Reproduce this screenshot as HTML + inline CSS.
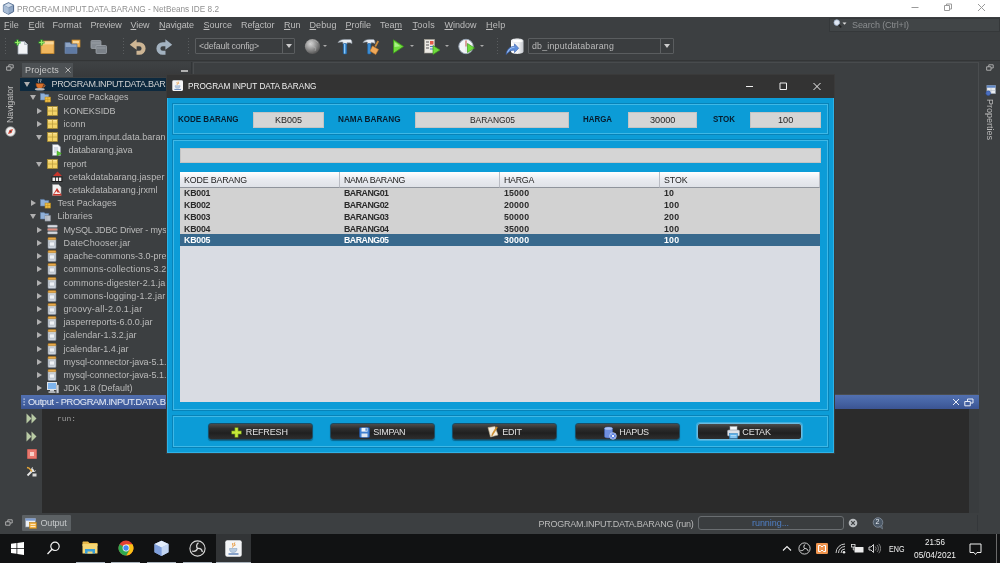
<!DOCTYPE html>
<html><head><meta charset="utf-8"><title>PROGRAM.INPUT.DATA.BARANG - NetBeans IDE 8.2</title>
<style>
html,body{margin:0;padding:0;}
body{width:1000px;height:563px;overflow:hidden;position:relative;background:#3c3f41;font-family:"Liberation Sans",sans-serif;font-size:8.8px;color:#bbbbbb;}
div,span,svg{position:absolute;box-sizing:border-box;}
.t{white-space:nowrap;line-height:12px;height:12px;}
.b{font-weight:bold;}
/* window title */
#wt{left:0;top:0;width:1000px;height:17px;background:#fff;}
#menu{left:0;top:17px;width:1000px;height:16.5px;background:#3c3f41;border-bottom:1px solid #323436;}
#menu .t{top:2px;color:#bdbdbd;font-size:9px;}
#menu u{text-decoration-thickness:1px;text-underline-offset:1px;}
#tb{left:0;top:33px;width:1000px;height:28px;background:#3c3f41;border-bottom:1px solid #333536;}
.combo{background:#3a3d3f;border:1px solid #5a5d5f;height:16px;top:4.5px;border-radius:1px;}
.combo .t{top:1px;left:3px;color:#bbb;font-size:8.8px;}
.carr{width:0;height:0;border-left:3px solid transparent;border-right:3px solid transparent;border-top:4px solid #ccc;}
.sarr{width:0;height:0;border-left:2px solid transparent;border-right:2px solid transparent;border-top:2.5px solid #aaa;top:12px;}
/* tree */
.row{left:20px;width:150px;height:13px;}
.tr{font-size:9px;color:#bbbbbb;}
.ar{width:0;height:0;border-top:3px solid transparent;border-bottom:3px solid transparent;border-left:5px solid #b0b0b0;}
.ad{width:0;height:0;border-left:3.5px solid transparent;border-right:3.5px solid transparent;border-top:5px solid #b0b0b0;}
.pk{width:9px;height:8px;background:#e8b840;border:1px solid #b58a20;}
.jar{width:7px;height:9px;background:#c9cdd3;border:1px solid #8d939b;border-top:2px solid #e0a040;}
/* dialog */
#dlg{left:166px;top:74px;width:669px;height:379.5px;background:#0c9cd7;border:1px solid #3a3a3a;}
#dt{left:0;top:0;width:667px;height:23px;background:#333333;}
.pnl{border:1px solid #3fb8e6;box-shadow:0 0 0 1px #0883b8;}
.inp{background:#d5d5d5;height:16px;border:1px solid #c4c4c4;}
.inp .t{top:1px;color:#222;font-size:9.4px;}
.lbl{color:#071d2e;font-weight:bold;font-size:9px;}
.btn{top:348px;width:105px;height:17px;border-radius:3px;background:linear-gradient(#4c4c4c,#2e2e2e 30%,#202020 60%,#2e2e2e);border:1px solid #1a4d66;box-shadow:0 1px 1px rgba(0,0,0,.35);}
.btn .t{color:#e2e2e2;font-size:9px;top:1.5px;}
.th{top:0;height:15.5px;background:linear-gradient(#ffffff,#e9ebf0 50%,#dfe2e8);border-right:1px solid #b9bcc4;border-bottom:1px solid #8f949c;}
.th .t{left:4px;top:2px;color:#222;font-size:8.8px;}
.trow{left:0;width:640px;height:11.8px;background:#d2d2d2;}
.trow .t{top:.9px;color:#2a2a2a;font-weight:bold;font-size:8.8px;line-height:11.8px;height:11.8px;}
/* taskbar */
#task{left:0;top:534px;width:1000px;height:29px;background:#111213;}
.ul{top:27.5px;height:1.5px;background:#aab4bd;}
</style></head>
<body>
<div id="root" style="left:0;top:0;width:1000px;height:563px;will-change:transform;">
<!-- window title bar -->
<div id="wt">
  <svg style="left:2px;top:2px" width="13" height="13" viewBox="0 0 13 13"><path d="M6.5 0.8 L11.6 3.2 V9.6 L6.5 12.3 L1.4 9.6 V3.2 Z" fill="#8fa6c4" stroke="#4a6488" stroke-width="1"/><path d="M6.5 0.8 L11.6 3.2 L6.5 5.8 L1.4 3.2 Z" fill="#cfdcec" stroke="#4a6488" stroke-width=".5"/><path d="M6.5 5.8 V12.3 L1.4 9.6 V3.2 Z" fill="#a9bdd6"/></svg>
  <span class="t" style="transform:scaleX(0.8965);transform-origin:0 0;left:17px;top:2.5px;font-size:9.2px;color:#909090;">PROGRAM.INPUT.DATA.BARANG - NetBeans IDE 8.2</span>
  <svg style="left:905px;top:0" width="90" height="17" viewBox="0 0 90 17"><g stroke="#9a9a9a" stroke-width="1" fill="none"><path d="M6.5 7.5h7"/><path d="M39.5 5.5h5v5h-5z M41.5 5.5v-1.5h5v5h-2"/><path d="M73 4l7 7M80 4l-7 7"/></g></svg>
</div>
<!-- menu bar -->
<div id="menu">
  <span class="t" style="letter-spacing:0.121px;left:4px;"><u>F</u>ile</span>
  <span class="t" style="letter-spacing:0.117px;left:28.5px;"><u>E</u>dit</span>
  <span class="t" style="letter-spacing:0.081px;left:52.5px;">Format</span>
  <span class="t" style="letter-spacing:-0.145px;left:90.5px;">Preview</span>
  <span class="t" style="letter-spacing:-0.090px;left:130.5px;"><u>V</u>iew</span>
  <span class="t" style="letter-spacing:-0.066px;left:159px;"><u>N</u>avigate</span>
  <span class="t" style="letter-spacing:-0.005px;left:203.5px;"><u>S</u>ource</span>
  <span class="t" style="letter-spacing:-0.068px;left:241px;">Ref<u>a</u>ctor</span>
  <span class="t" style="letter-spacing:-0.005px;left:284px;"><u>R</u>un</span>
  <span class="t" style="letter-spacing:0.094px;left:309.5px;"><u>D</u>ebug</span>
  <span class="t" style="letter-spacing:-0.004px;left:345.5px;"><u>P</u>rofile</span>
  <span class="t" style="letter-spacing:-0.004px;left:380px;">Tea<u>m</u></span>
  <span class="t" style="letter-spacing:0.297px;left:412.5px;"><u>T</u>ools</span>
  <span class="t" style="letter-spacing:-0.003px;left:444.5px;"><u>W</u>indow</span>
  <span class="t" style="letter-spacing:0.246px;left:486px;"><u>H</u>elp</span>
  <div style="left:829px;top:1px;width:171px;height:14px;background:#414547;border:1px solid #35383a;"></div>
  <svg style="left:832px;top:1px" width="16" height="12" viewBox="0 0 16 12"><circle cx="4.8" cy="4.6" r="2.8" fill="#dfe7f2" stroke="#9fb3cc" stroke-width=".8"/><path d="M6.8 6.8l2.4 2.6" stroke="#222" stroke-width="1.6"/><path d="M10.5 4.5h4l-2 2.2z" fill="#ddd"/></svg>
  <span class="t" style="letter-spacing:-0.118px;left:852px;color:#8a8d8f;">Search (Ctrl+I)</span>
</div>
<!-- toolbar -->
<div id="tb">
  <svg style="left:3px;top:4px" width="8" height="20" viewBox="0 0 8 20"><g fill="#5a5d5f"><rect x="2" y="1" width="1" height="1"/><rect x="2" y="4" width="1" height="1"/><rect x="2" y="7" width="1" height="1"/><rect x="2" y="10" width="1" height="1"/><rect x="2" y="13" width="1" height="1"/><rect x="2" y="16" width="1" height="1"/></g></svg>
  <!-- new file -->
  <svg style="left:14px;top:6px" width="16" height="16" viewBox="0 0 16 16"><path d="M4 2.5h6.5l3 3V15H4z" fill="#f2f4f7" stroke="#9aa3ad" stroke-width=".8"/><path d="M10.5 2.5v3h3" fill="#d5dbe2" stroke="#9aa3ad" stroke-width=".6"/><path d="M3.5 0.5v6M0.5 3.5h6" stroke="#2fa52f" stroke-width="2.2"/><path d="M3.5 1.2v4.6M1.2 3.5h4.6" stroke="#a6ef6a" stroke-width=".9"/></svg>
  <!-- new project -->
  <svg style="left:38px;top:6px" width="17" height="16" viewBox="0 0 17 16"><rect x="3" y="2" width="13" height="12.5" fill="#f1b75e" stroke="#c98a2c" stroke-width=".8"/><rect x="3.4" y="2.4" width="12.2" height="3" fill="#f8d79a"/><path d="M3.5 0.5v6M0.5 3.5h6" stroke="#2fa52f" stroke-width="2.2"/><path d="M3.5 1.2v4.6M1.2 3.5h4.6" stroke="#a6ef6a" stroke-width=".9"/></svg>
  <!-- open project -->
  <svg style="left:64px;top:6px" width="17" height="16" viewBox="0 0 17 16"><rect x="8" y="1" width="8" height="7" fill="#f0b45c" stroke="#c98a2c" stroke-width=".7"/><path d="M1 3.5h5l1 1.5h6v9.5H1z" fill="#8ea4c4" stroke="#5e7596" stroke-width=".8"/><path d="M1.3 8h11.5v6.2H1.3z" fill="#5f7aa3"/><rect x="9" y="2" width="6" height="2" fill="#f8d79a"/></svg>
  <!-- close project (grey) -->
  <svg style="left:90px;top:6px" width="18" height="16" viewBox="0 0 18 16"><rect x="1" y="1.5" width="10" height="8" rx="1" fill="#858b92" stroke="#a3a9b0" stroke-width=".7"/><rect x="6" y="6.5" width="10.5" height="8" rx="1" fill="#7b8188" stroke="#a3a9b0" stroke-width=".7"/><path d="M2 4h8M7 9h8.5" stroke="#9ea4ab" stroke-width=".8"/></svg>
  <svg style="left:120px;top:4px" width="8" height="20" viewBox="0 0 8 20"><g fill="#5a5d5f"><rect x="3" y="1" width="1" height="1"/><rect x="3" y="4" width="1" height="1"/><rect x="3" y="7" width="1" height="1"/><rect x="3" y="10" width="1" height="1"/><rect x="3" y="13" width="1" height="1"/><rect x="3" y="16" width="1" height="1"/></g></svg>
  <!-- undo -->
  <svg style="left:129px;top:6px" width="18" height="16" viewBox="0 0 18 16"><path d="M6.500 5.200H10.300a4.300 4.300 0 0 1 0 8.600H7.500" fill="none" stroke="#cdb594" stroke-width="4"/><path d="M.8 5.800L7.600 .3v10.400z" fill="#cdb594"/></svg>
  <!-- redo -->
  <svg style="left:155px;top:6px" width="18" height="16" viewBox="0 0 18 16"><path d="M11.500 5.200H7.700a4.300 4.300 0 0 0 0 8.600h2.800" fill="none" stroke="#a3b2c0" stroke-width="4"/><path d="M17.200 5.800L10.400 .3v10.400z" fill="#a3b2c0"/></svg>
  <svg style="left:185px;top:4px" width="8" height="20" viewBox="0 0 8 20"><g fill="#5a5d5f"><rect x="3" y="1" width="1" height="1"/><rect x="3" y="4" width="1" height="1"/><rect x="3" y="7" width="1" height="1"/><rect x="3" y="10" width="1" height="1"/><rect x="3" y="13" width="1" height="1"/><rect x="3" y="16" width="1" height="1"/></g></svg>
  <div class="combo" style="left:195px;width:100px;"><span class="t" style="letter-spacing:-0.163px;">&lt;default config&gt;</span><div style="left:86px;top:0;width:1px;height:14px;background:#5e6163"></div><div class="carr" style="left:89.5px;top:5px"></div></div>
  <!-- globe -->
  <svg style="left:304px;top:5px" width="17" height="17" viewBox="0 0 17 17"><defs><radialGradient id="gg" cx=".38" cy=".32" r=".75"><stop offset="0" stop-color="#d8d8d8"/><stop offset=".55" stop-color="#8a8a8a"/><stop offset="1" stop-color="#4a4a4a"/></radialGradient></defs><circle cx="8.5" cy="8.5" r="7.6" fill="url(#gg)"/><path d="M4 5c2-1 3 0 4 1s0 3 2 3 2 2 1 4M10 2c1 1 3 1 4 3" stroke="#b9b9b9" stroke-width=".8" fill="none" opacity=".6"/></svg>
  <div class="sarr" style="left:323px"></div>
  <!-- hammer -->
  <svg style="left:337px;top:5px" width="16" height="17" viewBox="0 0 16 17"><path d="M1 4.5c2-3 5-3.3 8-3h4.5c1 .2 1.5 2 1.5 4l-2-.8H10V6H6V4.2C4.5 3.8 3 4 1 4.500z" fill="#e9edf2" stroke="#8e98a5" stroke-width=".6"/><rect x="6.3" y="5.6" width="3.4" height="10.4" rx=".8" fill="#3d8fd6" stroke="#1f5f9f" stroke-width=".6"/><rect x="7" y="6" width="1.1" height="9.5" fill="#8cc6f3"/></svg>
  <!-- clean+build -->
  <svg style="left:362px;top:5px" width="19" height="17" viewBox="0 0 19 17"><path d="M1 4.500c2-3 5-3.300 8-3h2.500c1 .2 1.500 2 1.500 4l-2-.8H9V6H5.500V4.200C4.500 3.800 3 4 1 4.500z" fill="#e9edf2" stroke="#8e98a5" stroke-width=".6"/><rect x="5.600" y="5.600" width="3.200" height="10.400" rx=".8" fill="#3d8fd6" stroke="#1f5f9f" stroke-width=".6"/><path d="M15.500 2.500l1.500 1-3 5.500-1.500-1z" fill="#c98a3c"/><path d="M10.500 8l6 3.500-2.800 5-5.700-3.500z" fill="#f0a95a" stroke="#c47a2a" stroke-width=".6"/></svg>
  <!-- run -->
  <svg style="left:391px;top:5px" width="14" height="17" viewBox="0 0 14 17"><path d="M2.500 1.800L12.500 8.500 2.500 15.200z" fill="#6fdc3c" stroke="#3c9a1c" stroke-width=".8"/><path d="M3.500 4L9.500 8.200 3.500 9z" fill="#b9f59a" opacity=".8"/></svg>
  <div class="sarr" style="left:410px"></div>
  <!-- debug -->
  <svg style="left:423px;top:5px" width="18" height="17" viewBox="0 0 18 17"><rect x="1.500" y="1.500" width="10" height="13.500" fill="#eceae4" stroke="#a9a59a" stroke-width=".6"/><path d="M3 4h3M3 7h3M3 10h3" stroke="#555" stroke-width="1"/><rect x="7" y="3" width="3.500" height="3.500" fill="#e25b4a"/><path d="M7 8.500h3.500M7 11h3.500" stroke="#4a7fc8" stroke-width="1"/><path d="M10 7.500L17 12 10 16.500z" fill="#6fdc3c" stroke="#3c9a1c" stroke-width=".7"/></svg>
  <div class="sarr" style="left:444.500px"></div>
  <!-- profile -->
  <svg style="left:458px;top:5px" width="18" height="17" viewBox="0 0 18 17"><circle cx="8" cy="8.500" r="7.200" fill="#f3f5f8" stroke="#9ba8b8" stroke-width="1"/><path d="M8 8.500V2.500" stroke="#d24a3a" stroke-width="1.200"/><path d="M8 3v11" stroke="#c9ced6" stroke-width=".6"/><path d="M9.500 5.500L16.500 10 9.500 14.500z" fill="#6fdc3c" stroke="#3c9a1c" stroke-width=".7"/></svg>
  <div class="sarr" style="left:479.500px"></div>
  <svg style="left:494px;top:4px" width="8" height="20" viewBox="0 0 8 20"><g fill="#5a5d5f"><rect x="3" y="1" width="1" height="1"/><rect x="3" y="4" width="1" height="1"/><rect x="3" y="7" width="1" height="1"/><rect x="3" y="10" width="1" height="1"/><rect x="3" y="13" width="1" height="1"/><rect x="3" y="16" width="1" height="1"/></g></svg>
  <!-- db icon -->
  <svg style="left:505px;top:4px" width="20" height="19" viewBox="0 0 20 19"><defs><linearGradient id="cy" x1="0" x2="1"><stop offset="0" stop-color="#ffffff"/><stop offset=".6" stop-color="#f0f1f3"/><stop offset="1" stop-color="#c4c8ce"/></linearGradient></defs><path d="M6 4c0-3.200 12.500-3.200 12.500 0v10.500c0 3.200-12.500 3.200-12.500 0z" fill="url(#cy)"/><ellipse cx="12.250" cy="4" rx="5.600" ry="1.700" fill="#ffffff" stroke="#d5d8dd" stroke-width=".5"/><path d="M1 17.500c1-5.500 4-8 8.500-8.200V6.800l4.200 4.400-4.200 4.400v-2.400c-3.500-.2-5.500 1.300-8.500 4.300z" fill="#5f8fdc" stroke="#3a5fa8" stroke-width=".6"/><path d="M2.500 15.500c1.200-3.500 3.500-5 7-5.300" stroke="#a9c8f5" stroke-width=".9" fill="none"/></svg>
  <div class="combo" style="left:528px;width:146px;"><span class="t" style="letter-spacing:0.207px;">db_inputdatabarang</span><div style="left:131px;top:0;width:1px;height:14px;background:#5e6163"></div><div class="carr" style="left:135px;top:5px"></div></div>
</div>
<!-- projects panel -->
<div id="proj" style="left:20px;top:62px;width:172px;height:334px;background:#3c3f41;border-right:1px solid #323537;">
<div style="left:0;top:0;width:171px;height:15px;background:linear-gradient(#3f4244,#37393b);"></div>
<div style="left:2px;top:1px;width:51px;height:14px;background:#4d5154;"></div>
<span class="t" style="letter-spacing:0.186px;left:5px;top:2px;font-size:9px;color:#c8c8c8;">Projects</span>
<svg style="left:45px;top:5px" width="6" height="6" viewBox="0 0 6 6"><path d="M.5 .5l5 5M5.500 .5l-5 5" stroke="#c0c0c0" stroke-width=".9"/></svg>
<div style="left:161px;top:8px;width:7px;height:1.500px;background:#b0b0b0"></div>
<div class="row" style="left:0;top:15.70px;width:171px;background:#0d293e;">
<div class="ad" style="left:4px;top:4.500px"></div>
<svg style="left:13.5px;top:0" width="12" height="13" viewBox="0 0 12 13"><path d="M2 5.500h7.500c0 3-1 5-3.700 5S2 8.500 2 5.500z" fill="#d9722c" stroke="#8c3f12" stroke-width=".6"/><path d="M9.500 6.500c2 0 2 2.500-.5 2.500" fill="none" stroke="#d9722c" stroke-width="1"/><ellipse cx="5.800" cy="11.300" rx="5" ry="1.200" fill="#b8b8b8"/><path d="M4.500 4.500c-1-1.500 1-2 0-3.500M6.800 4.500c-1-1.500 1-2 0-3.500" stroke="#e8e8e8" stroke-width=".7" fill="none"/></svg>
<span class="t tr" style="letter-spacing:-0.327px;left:31.5px;top:.500px;color:#d0d0d0;">PROGRAM.INPUT.DATA.BAR</span>
</div>
<div class="row" style="left:0;top:28.92px;width:171px;">
<div class="ad" style="left:10px;top:4.500px"></div>
<svg style="left:19.5px;top:1.5px" width="11" height="11" viewBox="0 0 12 12"><path d="M.5 1.500h4l1 1.200h4v6H.5z" fill="#8fb0d8" stroke="#5e7fa8" stroke-width=".6"/><rect x="5.500" y="5.500" width="6" height="5.500" fill="#f0c048" stroke="#b8881c" stroke-width=".6"/><path d="M5.500 8.200h6M8.500 5.500v5.500" stroke="#b8881c" stroke-width=".5"/></svg>
<span class="t tr" style="letter-spacing:0.030px;left:37.5px;top:.500px;">Source Packages</span>
</div>
<div class="row" style="left:0;top:42.14px;width:171px;">
<div class="ar" style="left:17px;top:3.500px"></div>
<svg style="left:26.5px;top:1.500px" width="11" height="10" viewBox="0 0 11 10"><rect x=".5" y=".5" width="10" height="9" fill="#f3d468" stroke="#a88c30" stroke-width=".7"/><path d="M.5 5h10M5.500 .5v9" stroke="#b89a3c" stroke-width=".7"/><rect x="1.200" y="1.200" width="3.600" height="1" fill="#fbe6a8"/><rect x="6.200" y="1.200" width="3.600" height="1" fill="#fbe6a8"/></svg>
<span class="t tr" style="letter-spacing:-0.057px;left:43.5px;top:.500px;">KONEKSIDB</span>
</div>
<div class="row" style="left:0;top:55.36px;width:171px;">
<div class="ar" style="left:17px;top:3.500px"></div>
<svg style="left:26.5px;top:1.500px" width="11" height="10" viewBox="0 0 11 10"><rect x=".5" y=".5" width="10" height="9" fill="#f3d468" stroke="#a88c30" stroke-width=".7"/><path d="M.5 5h10M5.500 .5v9" stroke="#b89a3c" stroke-width=".7"/><rect x="1.200" y="1.200" width="3.600" height="1" fill="#fbe6a8"/><rect x="6.200" y="1.200" width="3.600" height="1" fill="#fbe6a8"/></svg>
<span class="t tr" style="letter-spacing:0.097px;left:43.5px;top:.500px;">iconn</span>
</div>
<div class="row" style="left:0;top:68.58px;width:171px;">
<div class="ad" style="left:16px;top:4.500px"></div>
<svg style="left:26.5px;top:1.500px" width="11" height="10" viewBox="0 0 11 10"><rect x=".5" y=".5" width="10" height="9" fill="#f3d468" stroke="#a88c30" stroke-width=".7"/><path d="M.5 5h10M5.500 .5v9" stroke="#b89a3c" stroke-width=".7"/><rect x="1.200" y="1.200" width="3.600" height="1" fill="#fbe6a8"/><rect x="6.200" y="1.200" width="3.600" height="1" fill="#fbe6a8"/></svg>
<span class="t tr" style="letter-spacing:0.038px;left:43.5px;top:.500px;">program.input.data.baran</span>
</div>
<div class="row" style="left:0;top:81.80px;width:171px;">
<svg style="left:30.5px;top:.500px" width="11" height="12" viewBox="0 0 11 12"><path d="M1.500 .500h5.500l2.500 2.500v8.500h-8z" fill="#f4f6f8" stroke="#8b95a1" stroke-width=".6"/><path d="M3 4h4M3 6h4M3 8h2" stroke="#8fa0b5" stroke-width=".6"/><path d="M6 7l4.500 2.500L6 12z" fill="#5dc832" stroke="#2f8a14" stroke-width=".5"/></svg>
<span class="t tr" style="letter-spacing:-0.037px;left:48.5px;top:.500px;">databarang.java</span>
</div>
<div class="row" style="left:0;top:95.02px;width:171px;">
<div class="ad" style="left:16px;top:4.500px"></div>
<svg style="left:26.5px;top:1.500px" width="11" height="10" viewBox="0 0 11 10"><rect x=".5" y=".5" width="10" height="9" fill="#f3d468" stroke="#a88c30" stroke-width=".7"/><path d="M.5 5h10M5.500 .5v9" stroke="#b89a3c" stroke-width=".7"/><rect x="1.200" y="1.200" width="3.600" height="1" fill="#fbe6a8"/><rect x="6.200" y="1.200" width="3.600" height="1" fill="#fbe6a8"/></svg>
<span class="t tr" style="letter-spacing:-0.086px;left:43.5px;top:.500px;">report</span>
</div>
<div class="row" style="left:0;top:108.24px;width:171px;">
<svg style="left:30.5px;top:.500px" width="12" height="12" viewBox="0 0 12 12"><path d="M2 5L6.500 .500 11 5z" fill="#c8352b"/><rect x=".5" y="5.500" width="11" height="5.500" fill="#1e1e1e"/><rect x="1.500" y="6.500" width="2.500" height="3.500" fill="#eee"/><rect x="4.800" y="6.500" width="2.200" height="3.500" fill="#eee"/><rect x="7.800" y="6.500" width="2.500" height="3.500" fill="#eee"/></svg>
<span class="t tr" style="letter-spacing:0.087px;left:48.5px;top:.500px;">cetakdatabarang.jasper</span>
</div>
<div class="row" style="left:0;top:121.46px;width:171px;">
<svg style="left:30.5px;top:.500px" width="12" height="12" viewBox="0 0 12 12"><path d="M1.500 .500h6l2.500 2.500v8.500h-8.500z" fill="#f2f2f2" stroke="#999" stroke-width=".6"/><path d="M1.500 11.500L6 4l5 7.500z" fill="#c8352b"/><path d="M3 10l2.500-3 1.500 2 1-1 1.500 2z" fill="#fff" opacity=".9"/></svg>
<span class="t tr" style="letter-spacing:0.022px;left:48.5px;top:.500px;">cetakdatabarang.jrxml</span>
</div>
<div class="row" style="left:0;top:134.68px;width:171px;">
<div class="ar" style="left:11px;top:3.500px"></div>
<svg style="left:19.5px;top:1.5px" width="11" height="11" viewBox="0 0 12 12"><path d="M.5 1.500h4l1 1.200h4v6H.5z" fill="#8fb0d8" stroke="#5e7fa8" stroke-width=".6"/><rect x="5.500" y="5.500" width="6" height="5.500" fill="#f0c048" stroke="#b8881c" stroke-width=".6"/><path d="M5.500 8.200h6M8.500 5.500v5.500" stroke="#b8881c" stroke-width=".5"/></svg>
<span class="t tr" style="letter-spacing:0.036px;left:37.5px;top:.500px;">Test Packages</span>
</div>
<div class="row" style="left:0;top:147.90px;width:171px;">
<div class="ad" style="left:10px;top:4.500px"></div>
<svg style="left:19.5px;top:1.5px" width="11" height="11" viewBox="0 0 12 12"><path d="M.5 1.500h4l1 1.200h4v6H.5z" fill="#8fb0d8" stroke="#5e7fa8" stroke-width=".6"/><rect x="5.500" y="5" width="6" height="6" fill="#d8dce2" stroke="#7d8590" stroke-width=".6"/><path d="M7 5v6M8.500 5v6M10 5v6" stroke="#7d8590" stroke-width=".5"/></svg>
<span class="t tr" style="letter-spacing:0.054px;left:37.5px;top:.500px;">Libraries</span>
</div>
<div class="row" style="left:0;top:161.12px;width:171px;">
<div class="ar" style="left:17px;top:3.500px"></div>
<svg style="left:26.5px;top:1px" width="11" height="11" viewBox="0 0 11 11"><rect x=".5" y="1" width="10" height="2.500" rx="1" fill="#d8dce2" stroke="#80868f" stroke-width=".5"/><rect x=".5" y="4.300" width="10" height="2.500" rx="1" fill="#e08a7a" stroke="#80868f" stroke-width=".5"/><rect x=".5" y="7.600" width="10" height="2.500" rx="1" fill="#d8dce2" stroke="#80868f" stroke-width=".5"/></svg>
<span class="t tr" style="letter-spacing:-0.160px;left:43.5px;top:.500px;">MySQL JDBC Driver - mys</span>
</div>
<div class="row" style="left:0;top:174.34px;width:171px;">
<div class="ar" style="left:17px;top:3.500px"></div>
<svg style="left:26.5px;top:.500px" width="10" height="12" viewBox="0 0 10 12"><rect x="1" y="1.500" width="8" height="10" rx="1" fill="#cfd5dd" stroke="#858d98" stroke-width=".6"/><rect x="1" y=".500" width="8" height="2.200" rx=".8" fill="#e8a948" stroke="#a8741c" stroke-width=".5"/><rect x="2.500" y="5" width="5" height="4" fill="#eef1f5" stroke="#98a0ab" stroke-width=".4"/></svg>
<span class="t tr" style="letter-spacing:0.130px;left:43.5px;top:.500px;">DateChooser.jar</span>
</div>
<div class="row" style="left:0;top:187.56px;width:171px;">
<div class="ar" style="left:17px;top:3.500px"></div>
<svg style="left:26.5px;top:.500px" width="10" height="12" viewBox="0 0 10 12"><rect x="1" y="1.500" width="8" height="10" rx="1" fill="#cfd5dd" stroke="#858d98" stroke-width=".6"/><rect x="1" y=".500" width="8" height="2.200" rx=".8" fill="#e8a948" stroke="#a8741c" stroke-width=".5"/><rect x="2.500" y="5" width="5" height="4" fill="#eef1f5" stroke="#98a0ab" stroke-width=".4"/></svg>
<span class="t tr" style="letter-spacing:-0.003px;left:43.5px;top:.500px;">apache-commons-3.0-pre</span>
</div>
<div class="row" style="left:0;top:200.78px;width:171px;">
<div class="ar" style="left:17px;top:3.500px"></div>
<svg style="left:26.5px;top:.500px" width="10" height="12" viewBox="0 0 10 12"><rect x="1" y="1.500" width="8" height="10" rx="1" fill="#cfd5dd" stroke="#858d98" stroke-width=".6"/><rect x="1" y=".500" width="8" height="2.200" rx=".8" fill="#e8a948" stroke="#a8741c" stroke-width=".5"/><rect x="2.500" y="5" width="5" height="4" fill="#eef1f5" stroke="#98a0ab" stroke-width=".4"/></svg>
<span class="t tr" style="letter-spacing:0.150px;left:43.5px;top:.500px;">commons-collections-3.2</span>
</div>
<div class="row" style="left:0;top:214.00px;width:171px;">
<div class="ar" style="left:17px;top:3.500px"></div>
<svg style="left:26.5px;top:.500px" width="10" height="12" viewBox="0 0 10 12"><rect x="1" y="1.500" width="8" height="10" rx="1" fill="#cfd5dd" stroke="#858d98" stroke-width=".6"/><rect x="1" y=".500" width="8" height="2.200" rx=".8" fill="#e8a948" stroke="#a8741c" stroke-width=".5"/><rect x="2.500" y="5" width="5" height="4" fill="#eef1f5" stroke="#98a0ab" stroke-width=".4"/></svg>
<span class="t tr" style="letter-spacing:0.128px;left:43.5px;top:.500px;">commons-digester-2.1.ja</span>
</div>
<div class="row" style="left:0;top:227.22px;width:171px;">
<div class="ar" style="left:17px;top:3.500px"></div>
<svg style="left:26.5px;top:.500px" width="10" height="12" viewBox="0 0 10 12"><rect x="1" y="1.500" width="8" height="10" rx="1" fill="#cfd5dd" stroke="#858d98" stroke-width=".6"/><rect x="1" y=".500" width="8" height="2.200" rx=".8" fill="#e8a948" stroke="#a8741c" stroke-width=".5"/><rect x="2.500" y="5" width="5" height="4" fill="#eef1f5" stroke="#98a0ab" stroke-width=".4"/></svg>
<span class="t tr" style="letter-spacing:0.128px;left:43.5px;top:.500px;">commons-logging-1.2.jar</span>
</div>
<div class="row" style="left:0;top:240.44px;width:171px;">
<div class="ar" style="left:17px;top:3.500px"></div>
<svg style="left:26.5px;top:.500px" width="10" height="12" viewBox="0 0 10 12"><rect x="1" y="1.500" width="8" height="10" rx="1" fill="#cfd5dd" stroke="#858d98" stroke-width=".6"/><rect x="1" y=".500" width="8" height="2.200" rx=".8" fill="#e8a948" stroke="#a8741c" stroke-width=".5"/><rect x="2.500" y="5" width="5" height="4" fill="#eef1f5" stroke="#98a0ab" stroke-width=".4"/></svg>
<span class="t tr" style="letter-spacing:0.223px;left:43.5px;top:.500px;">groovy-all-2.0.1.jar</span>
</div>
<div class="row" style="left:0;top:253.66px;width:171px;">
<div class="ar" style="left:17px;top:3.500px"></div>
<svg style="left:26.5px;top:.500px" width="10" height="12" viewBox="0 0 10 12"><rect x="1" y="1.500" width="8" height="10" rx="1" fill="#cfd5dd" stroke="#858d98" stroke-width=".6"/><rect x="1" y=".500" width="8" height="2.200" rx=".8" fill="#e8a948" stroke="#a8741c" stroke-width=".5"/><rect x="2.500" y="5" width="5" height="4" fill="#eef1f5" stroke="#98a0ab" stroke-width=".4"/></svg>
<span class="t tr" style="letter-spacing:0.041px;left:43.5px;top:.500px;">jasperreports-6.0.0.jar</span>
</div>
<div class="row" style="left:0;top:266.88px;width:171px;">
<div class="ar" style="left:17px;top:3.500px"></div>
<svg style="left:26.5px;top:.500px" width="10" height="12" viewBox="0 0 10 12"><rect x="1" y="1.500" width="8" height="10" rx="1" fill="#cfd5dd" stroke="#858d98" stroke-width=".6"/><rect x="1" y=".500" width="8" height="2.200" rx=".8" fill="#e8a948" stroke="#a8741c" stroke-width=".5"/><rect x="2.500" y="5" width="5" height="4" fill="#eef1f5" stroke="#98a0ab" stroke-width=".4"/></svg>
<span class="t tr" style="letter-spacing:0.050px;left:43.5px;top:.500px;">jcalendar-1.3.2.jar</span>
</div>
<div class="row" style="left:0;top:280.10px;width:171px;">
<div class="ar" style="left:17px;top:3.500px"></div>
<svg style="left:26.5px;top:.500px" width="10" height="12" viewBox="0 0 10 12"><rect x="1" y="1.500" width="8" height="10" rx="1" fill="#cfd5dd" stroke="#858d98" stroke-width=".6"/><rect x="1" y=".500" width="8" height="2.200" rx=".8" fill="#e8a948" stroke="#a8741c" stroke-width=".5"/><rect x="2.500" y="5" width="5" height="4" fill="#eef1f5" stroke="#98a0ab" stroke-width=".4"/></svg>
<span class="t tr" style="letter-spacing:0.027px;left:43.5px;top:.500px;">jcalendar-1.4.jar</span>
</div>
<div class="row" style="left:0;top:293.32px;width:171px;">
<div class="ar" style="left:17px;top:3.500px"></div>
<svg style="left:26.5px;top:.500px" width="10" height="12" viewBox="0 0 10 12"><rect x="1" y="1.500" width="8" height="10" rx="1" fill="#cfd5dd" stroke="#858d98" stroke-width=".6"/><rect x="1" y=".500" width="8" height="2.200" rx=".8" fill="#e8a948" stroke="#a8741c" stroke-width=".5"/><rect x="2.500" y="5" width="5" height="4" fill="#eef1f5" stroke="#98a0ab" stroke-width=".4"/></svg>
<span class="t tr" style="letter-spacing:-0.022px;left:43.5px;top:.500px;">mysql-connector-java-5.1.</span>
</div>
<div class="row" style="left:0;top:306.54px;width:171px;">
<div class="ar" style="left:17px;top:3.500px"></div>
<svg style="left:26.5px;top:.500px" width="10" height="12" viewBox="0 0 10 12"><rect x="1" y="1.500" width="8" height="10" rx="1" fill="#cfd5dd" stroke="#858d98" stroke-width=".6"/><rect x="1" y=".500" width="8" height="2.200" rx=".8" fill="#e8a948" stroke="#a8741c" stroke-width=".5"/><rect x="2.500" y="5" width="5" height="4" fill="#eef1f5" stroke="#98a0ab" stroke-width=".4"/></svg>
<span class="t tr" style="letter-spacing:-0.022px;left:43.5px;top:.500px;">mysql-connector-java-5.1.</span>
</div>
<div class="row" style="left:0;top:319.76px;width:171px;">
<div class="ar" style="left:17px;top:3.500px"></div>
<svg style="left:26.5px;top:.500px" width="12" height="12" viewBox="0 0 12 12"><rect x=".5" y=".500" width="9" height="7" fill="#7db4ee" stroke="#dfe4ea" stroke-width="1"/><rect x="3" y="8" width="4" height="1.500" fill="#c8ccd2"/><rect x="1.500" y="9.500" width="7" height="1.200" fill="#dfe4ea"/><rect x="9.500" y="3" width="2.200" height="8" fill="#d0d4da" stroke="#8c929a" stroke-width=".4"/></svg>
<span class="t tr" style="letter-spacing:-0.002px;left:43.5px;top:.500px;">JDK 1.8 (Default)</span>
</div>
</div>
<!-- left sidebar -->
<div style="left:0;top:61px;width:20px;height:452px;background:#3c3f41;"></div>
<svg style="left:5.5px;top:64px" width="8" height="7.2" viewBox="0 0 10 9"><path d="M3.500 3.500V1h5.500v4H6.500M.800 3.500h5.500v4.300H.800z" fill="none" stroke="#c4c4c4" stroke-width="1"/></svg>
<span class="t" style="letter-spacing:-0.170px;left:3.5px;top:122.5px;transform:rotate(-90deg);transform-origin:0 0;font-size:9px;color:#bbbbbb;">Navigator</span>
<svg style="left:4.5px;top:125.5px" width="11" height="11" viewBox="0 0 11 11"><circle cx="5.500" cy="5.500" r="4.800" fill="#f0f0f0" stroke="#9a9a9a" stroke-width=".8"/><path d="M3 8l1.500-4L8 3 6.500 7z" fill="#d24a3a"/><circle cx="5.500" cy="5.500" r=".8" fill="#444"/></svg>
<!-- editor area -->
<div style="left:193px;top:62px;width:786px;height:333px;background:#3c3f41;border:1px solid #4a4d4f;border-top-color:#484b4d;"></div>
<!-- right sidebar -->
<div style="left:980px;top:61px;width:20px;height:452px;background:#3c3f41;"></div>
<svg style="left:985.5px;top:64px" width="8" height="7.2" viewBox="0 0 10 9"><path d="M3.500 3.500V1h5.500v4H6.500M.800 3.500h5.500v4.300H.800z" fill="none" stroke="#c4c4c4" stroke-width="1"/></svg>
<svg style="left:985px;top:84.5px" width="12" height="11" viewBox="0 0 12 12"><rect x="1.500" y=".500" width="9.500" height="9" fill="#e8ebef" stroke="#8a95a5" stroke-width=".6"/><rect x="1.500" y=".500" width="9.500" height="2.500" fill="#5f86c4"/><path d="M6 3v6.500M1.500 6h9.500" stroke="#a9b1bd" stroke-width=".5"/><circle cx="3" cy="9" r="2.600" fill="#4a6fc0" stroke="#2c4a90" stroke-width=".5"/></svg>
<span class="t" style="letter-spacing:-0.003px;left:995.5px;top:99px;transform:rotate(90deg);transform-origin:0 0;font-size:9px;color:#bbbbbb;">Properties</span>

<!-- output panel -->
<div id="outp" style="left:21px;top:395px;width:958px;height:118px;background:#2b2b2b;">
  <div style="left:0;top:0;width:958px;height:14px;background:linear-gradient(#5270b0,#4664a4 50%,#3b5492);"></div>
  <svg style="left:1.5px;top:3px" width="3" height="9" viewBox="0 0 3 9"><g fill="#dfe6f5"><rect x=".5" y=".5" width="1.2" height="1.2"/><rect x=".5" y="3.3" width="1.2" height="1.2"/><rect x=".5" y="6.100" width="1.2" height="1.2"/></g></svg>
  <span class="t" style="letter-spacing:-0.377px;left:7px;top:1px;font-size:9.3px;color:#e8ecf6;">Output - PROGRAM.INPUT.DATA.B</span>
  <svg style="left:931px;top:3px" width="8" height="8" viewBox="0 0 8 8"><path d="M1 1l6 6M7 1l-6 6" stroke="#e8ecf5" stroke-width="1"/></svg>
  <svg style="left:943px;top:2.5px" width="10" height="9" viewBox="0 0 10 9"><path d="M3.500 3.500V1h5.500v4H6.500M.800 3.500h5.500v4.300H.800z" fill="none" stroke="#e8ecf5" stroke-width="1"/></svg>
  <div style="left:0;top:14px;width:21px;height:104px;background:#3c3f41;"></div>
  <div style="left:948px;top:14px;width:10px;height:104px;background:#393c3e;"></div>
  <!-- side icons -->
  <svg style="left:4.5px;top:18px" width="11" height="11" viewBox="0 0 11 11"><path d="M.5 .500L5.500 5.500 .5 10.500z" fill="#b9cba5"/><path d="M5.500 .500L10.500 5.500 5.500 10.500z" fill="#b9cba5"/></svg>
  <svg style="left:4.5px;top:36px" width="11" height="11" viewBox="0 0 11 11"><path d="M.5 .500L5.500 5.500 .5 10.500z" fill="#b9cba5"/><path d="M5.500 .500L10.500 5.500 5.500 10.500z" fill="#b9cba5"/></svg>
  <svg style="left:6px;top:54px" width="10" height="10" viewBox="0 0 10 10"><rect x=".3" y=".3" width="9.400" height="9.400" rx=".8" fill="#e8786e" stroke="#d85a50" stroke-width=".6"/><rect x="3" y="3" width="4" height="4" fill="#f8cfc8"/></svg>
  <svg style="left:5px;top:70.5px" width="11" height="11" viewBox="0 0 11 11"><path d="M1.500 9.500L7.500 3.500" stroke="#e8e8e8" stroke-width="1.800"/><path d="M7 1a2.500 2.500 0 1 0 3 3L8.300 5 6.500 3z" fill="#e8e8e8"/><path d="M1 1.500l2 .5 3 3.500" stroke="#e8a838" stroke-width="1.300" fill="none"/><rect x="6.500" y="7.500" width="4" height="3" fill="#d8d8d8"/></svg>
  <span class="t" style="letter-spacing:-0.051px;left:36px;top:18px;font-family:'Liberation Mono',monospace;font-size:8px;color:#9e9e9e;">run:</span>
</div>
<!-- status bar -->
<div id="stat" style="left:0;top:513px;width:1000px;height:21px;background:#3c3f41;">
  <svg style="left:4.5px;top:6px" width="8" height="7.2" viewBox="0 0 10 9"><path d="M3.500 3.500V1h5.500v4H6.500M.800 3.500h5.500v4.300H.800z" fill="none" stroke="#c4c4c4" stroke-width="1"/></svg>
  <div style="left:22px;top:2px;width:49px;height:16px;background:#5c6164;border-radius:1px;"></div>
  <svg style="left:25px;top:4.500px" width="12" height="11" viewBox="0 0 12 11"><rect x=".5" y=".5" width="10" height="8.500" fill="#eceff3" stroke="#8a93a0" stroke-width=".6"/><rect x=".5" y=".5" width="10" height="2.200" fill="#7d9ccf"/><rect x="4.500" y="4.500" width="7" height="6" fill="#f0b040" stroke="#b57c18" stroke-width=".6"/><path d="M5.500 6.500h5M5.500 8.500h5" stroke="#fff" stroke-width=".7"/></svg>
  <span class="t" style="letter-spacing:-0.172px;left:40.500px;top:4px;font-size:9px;color:#c6c9cb;">Output</span>
  <span class="t" style="letter-spacing:-0.232px;left:538.500px;top:4.500px;font-size:9px;color:#bbbbbb;">PROGRAM.INPUT.DATA.BARANG (run)</span>
  <div style="left:698px;top:3px;width:146px;height:13.500px;border:1px solid #6a6e71;border-radius:3px;background:#3a3d3f;"></div>
  <span class="t" style="letter-spacing:-0.053px;left:752px;top:4px;font-size:9px;color:#4f7fc4;">running...</span>
  <svg style="left:848px;top:5px" width="10" height="10" viewBox="0 0 10 10"><circle cx="5" cy="5" r="4.300" fill="#b9bcbf"/><path d="M3.200 3.200l3.600 3.600M6.800 3.200l-3.600 3.600" stroke="#3c3f41" stroke-width="1.200"/></svg>
  <svg style="left:872px;top:3.500px" width="13" height="13" viewBox="0 0 13 13"><circle cx="6" cy="5.500" r="4.800" fill="#4b5866" stroke="#8e9aa8" stroke-width=".7"/><path d="M7.500 9.500l3 2.500-.5-3.500z" fill="#4b5866" stroke="#8e9aa8" stroke-width=".5"/></svg>
  <span class="t" style="left:875.500px;top:3px;font-size:7px;color:#e8edf3;">2</span>
  <div style="left:977px;top:2px;width:1px;height:16px;background:#34373a"></div>
</div>
<!-- taskbar -->
<div id="task">
  <div style="left:216px;top:0;width:35px;height:29px;background:#323436;"></div>
  <svg style="left:11px;top:8px" width="13" height="13" viewBox="0 0 13 13"><path d="M0 1.800L5.500 1v5H0zM6.300 .900L13 0v6H6.300zM0 6.800h5.500v5L0 11zM6.300 6.800H13V13l-6.700-.900z" fill="#ffffff"/></svg>
  <svg style="left:46px;top:6px" width="16" height="16" viewBox="0 0 16 16"><circle cx="9" cy="6.300" r="4.200" fill="none" stroke="#f2f2f2" stroke-width="1.200"/><path d="M6 9.300L1.500 14" stroke="#f2f2f2" stroke-width="1.300"/></svg>
  <!-- explorer -->
  <svg style="left:82px;top:7px" width="16" height="14" viewBox="0 0 16 14"><path d="M.5 1.500c0-.6.400-1 1-1h4.500l1.500 1.500h8v3H.5z" fill="#e9b949"/><rect x=".5" y="3" width="15" height="9.500" rx=".5" fill="#f6d775"/><path d="M3 8h10v4.500H3z" fill="#3a9fd8"/><path d="M5.500 10.500h5v2h-5z" fill="#f6d775"/></svg>
  <!-- chrome -->
  <svg style="left:118px;top:6px" width="16" height="16" viewBox="0 0 16 16"><circle cx="8" cy="8" r="7.500" fill="#e34133"/><path d="M8 8L1.500 4.200A7.500 7.500 0 0 0 8.300 15.500L11.500 10z" fill="#2ea94f"/><path d="M8 8l3.500 2L8.300 15.500A7.500 7.500 0 0 0 14.500 4.200H8z" fill="#fbc116"/><circle cx="8" cy="8" r="3.400" fill="#fff"/><circle cx="8" cy="8" r="2.700" fill="#4688f1"/></svg>
  <!-- netbeans cube -->
  <svg style="left:153px;top:6px" width="17" height="17" viewBox="0 0 17 17"><path d="M8.500 .800L15.500 4V12.300L8.500 16 1.500 12.300V4z" fill="#9fb8e4"/><path d="M8.500 .800L15.500 4 8.500 7.500 1.500 4z" fill="#e3edfb"/><path d="M8.500 7.500V16L15.500 12.300V4z" fill="#c3d6f3"/><path d="M8.500 7.500V16L1.500 12.300V4z" fill="#7f9fdc"/></svg>
  <!-- OBS -->
  <svg style="left:189px;top:5.500px" width="17" height="17" viewBox="0 0 17 17"><circle cx="8.500" cy="8.500" r="7.600" fill="#1c1c1c" stroke="#d8d8d8" stroke-width="1.100"/><path d="M8.500 8.500c-1.500-2-1-4.500 1-5.800M8.500 8.500c2.500-.3 4.500 1.200 4.800 3.500M8.500 8.500c-1 2.300-3.300 3.300-5.500 2.500" stroke="#d8d8d8" stroke-width="1.300" fill="none"/></svg>
  <!-- java -->
  <svg style="left:225px;top:5.500px" width="17" height="17" viewBox="0 0 17 17"><rect x=".3" y=".3" width="16.400" height="16.400" rx="2" fill="#f4f5f7"/><path d="M8 3c-1.500 1.500 1.500 2.500-.5 4.500M9.800 2.500c-1 1.200 1 2-.3 3.500" stroke="#e8912d" stroke-width="1" fill="none"/><path d="M4.500 8.500h7.500c0 2.500-1.200 4-3.800 4s-3.700-1.500-3.700-4z" fill="#b8cbe0" stroke="#7f9abd" stroke-width=".5"/><path d="M3.500 14h10" stroke="#5a7fb5" stroke-width="1.400"/></svg>
  <div class="ul" style="left:76px;width:29px;"></div>
  <div class="ul" style="left:111px;width:29px;"></div>
  <div class="ul" style="left:147px;width:29px;"></div>
  <div class="ul" style="left:183px;width:29px;"></div>
  <div class="ul" style="left:216px;width:35px;"></div>
  <!-- tray -->
  <div style="left:996px;top:0;width:1px;height:29px;background:#6a6a6a"></div>
  <svg style="left:782px;top:11px" width="10" height="7" viewBox="0 0 10 7"><path d="M1 5.500L5 1.500l4 4" stroke="#f0f0f0" stroke-width="1.100" fill="none"/></svg>
  <svg style="left:798px;top:8px" width="13" height="13" viewBox="0 0 13 13"><circle cx="6.500" cy="6.500" r="5.600" fill="none" stroke="#e0e0e0" stroke-width=".9"/><path d="M6.500 6.500c-1.100-1.500-.700-3.400.800-4.300M6.500 6.500c1.900-.200 3.400.900 3.600 2.600M6.500 6.500c-.800 1.700-2.500 2.500-4.100 1.900" stroke="#e0e0e0" stroke-width="1" fill="none"/></svg>
  <svg style="left:816px;top:9px" width="12" height="11" viewBox="0 0 12 11"><rect x="0" y="0" width="12" height="11" rx="1.200" fill="#f0954f"/><path d="M2.500 2.500h2L6 4l1.500-1.500h2v6h-2L6 7 4.500 8.500h-2z" fill="none" stroke="#fff" stroke-width="1"/></svg>
  <svg style="left:835px;top:9px" width="12" height="11" viewBox="0 0 12 11"><path d="M1 10a9 9 0 0 1 9-9M3.500 10a6.500 6.500 0 0 1 6.500-6.500M6 10a4 4 0 0 1 4-4" stroke="#c8c8c8" stroke-width="1" fill="none"/><circle cx="9" cy="9.200" r="1.300" fill="#e8e8e8"/></svg>
  <svg style="left:851px;top:9.500px" width="13" height="10" viewBox="0 0 13 10"><rect x="3.500" y="3" width="9" height="5.500" rx=".6" fill="#ececec"/><rect x=".5" y=".5" width="3.500" height="2.500" fill="none" stroke="#e8e8e8" stroke-width=".8"/><path d="M2.300 3v3h1.200" stroke="#e8e8e8" stroke-width=".8" fill="none"/></svg>
  <svg style="left:868px;top:9px" width="13" height="11" viewBox="0 0 13 11"><path d="M1 4h2l2.500-2.500v8L3 7H1z" fill="none" stroke="#e8e8e8" stroke-width=".9"/><path d="M7.300 3.500a3 3 0 0 1 0 4M9 2a5 5 0 0 1 0 7M10.800 .800a7 7 0 0 1 0 9.400" stroke="#9a9a9a" stroke-width=".8" fill="none"/></svg>
  <span class="t" style="transform:scaleX(0.8124);transform-origin:0 0;left:888.5px;top:8.500px;font-size:8.8px;color:#f2f2f2;">ENG</span>
  <span class="t" style="transform:scaleX(0.8877);transform-origin:0 0;left:925px;top:2px;font-size:9px;color:#f2f2f2;">21:56</span>
  <span class="t" style="transform:scaleX(0.9324);transform-origin:0 0;left:914px;top:15px;font-size:9px;color:#f2f2f2;">05/04/2021</span>
  <svg style="left:969px;top:8.500px" width="13" height="13" viewBox="0 0 13 13"><path d="M1 1h11v8.500H8L6.500 11.500 5 9.500H1z" fill="none" stroke="#f0f0f0" stroke-width="1"/></svg>
</div>
<!-- dialog -->
<div id="dlg">
<div style="left:0;top:22.5px;width:667px;height:355.5px;border:1px solid #2fb2e6;border-top:none;"></div>
<div id="dt"></div>
<svg style="left:4.7px;top:4.8px" width="11.3" height="11.3" viewBox="0 0 12 12"><rect x=".3" y=".3" width="11.400" height="11.400" rx="1.500" fill="#f4f5f7"/><path d="M5.600 2c-1 1 1 1.800-.3 3.200M7 1.800c-.700.800.700 1.400-.2 2.400" stroke="#e8912d" stroke-width=".8" fill="none"/><path d="M3.200 6h5.400c0 1.800-.900 2.800-2.700 2.800S3.200 7.800 3.200 6z" fill="#b8cbe0" stroke="#7f9abd" stroke-width=".4"/><path d="M2.500 10h7" stroke="#5a7fb5" stroke-width="1"/></svg>
<span class="t" style="transform:scaleX(0.8926);transform-origin:0 0;left:20.5px;top:4.700px;font-size:9.2px;color:#f0f0f0;">PROGRAM INPUT DATA BARANG</span>
<svg style="left:575px;top:5px" width="85" height="13" viewBox="0 0 85 13"><g stroke="#f0f0f0" stroke-width="1" fill="none"><path d="M4 6.500h7"/><path d="M38 3h6.500v6.500H38z"/><path d="M71.500 3l7 7M78.500 3l-7 7"/></g></svg>
<div class="pnl" style="left:6px;top:29px;width:654.5px;height:30px;"></div>
<div class="pnl" style="left:6px;top:65px;width:654.5px;height:270px;"></div>
<div class="pnl" style="left:6px;top:341px;width:654.5px;height:31px;"></div>
<span class="t lbl" style="transform:scaleX(0.8895);transform-origin:0 0;left:11px;top:38px;">KODE BARANG</span>
<span class="t lbl" style="transform:scaleX(0.9116);transform-origin:0 0;left:170.8px;top:38px;">NAMA BARANG</span>
<span class="t lbl" style="transform:scaleX(0.8788);transform-origin:0 0;left:416.3px;top:38px;">HARGA</span>
<span class="t lbl" style="transform:scaleX(0.8855);transform-origin:0 0;left:546.2px;top:38px;">STOK</span>
<div class="inp" style="left:86.0px;top:37px;width:71.0px;"><span class="t" style="transform:scaleX(0.9589);transform-origin:0 0;left:21.0px;width:auto;text-align:left;">KB005</span></div>
<div class="inp" style="left:248.0px;top:37px;width:154.0px;"><span class="t" style="transform:scaleX(0.8994);transform-origin:0 0;left:53.5px;width:auto;text-align:left;">BARANG05</span></div>
<div class="inp" style="left:460.5px;top:37px;width:69.7px;"><span class="t" style="transform:scaleX(0.9740);transform-origin:0 0;left:21.2px;width:auto;text-align:left;">30000</span></div>
<div class="inp" style="left:583.4px;top:37px;width:70.2px;"><span class="t" style="transform:scaleX(0.9772);transform-origin:0 0;left:26.5px;width:auto;text-align:left;">100</span></div>
<div class="inp" style="left:12.6px;top:73px;width:641px;height:15px;"></div>
<div id="tbl" style="left:13px;top:97px;width:640px;height:230px;background:#d9dce3;overflow:hidden;">
<div class="th" style="left:0px;width:160px;"><span class="t" style="letter-spacing:-0.139px;">KODE BARANG</span></div>
<div class="th" style="left:160px;width:160px;"><span class="t" style="letter-spacing:-0.321px;">NAMA BARANG</span></div>
<div class="th" style="left:320px;width:160px;"><span class="t" style="letter-spacing:-0.259px;">HARGA</span></div>
<div class="th" style="left:480px;width:160px;"><span class="t" style="letter-spacing:-0.074px;">STOK</span></div>
<div class="trow" style="top:15.50px;">
<span class="t" style="letter-spacing:-0.218px;left:4px;">KB001</span>
<span class="t" style="letter-spacing:-0.488px;left:164px;">BARANG01</span>
<span class="t" style="letter-spacing:0.146px;left:324px;">15000</span>
<span class="t" style="letter-spacing:0.102px;left:484px;">10</span>
</div>
<div class="trow" style="top:27.22px;">
<span class="t" style="letter-spacing:-0.218px;left:4px;">KB002</span>
<span class="t" style="letter-spacing:-0.488px;left:164px;">BARANG02</span>
<span class="t" style="letter-spacing:0.146px;left:324px;">20000</span>
<span class="t" style="letter-spacing:0.204px;left:484px;">100</span>
</div>
<div class="trow" style="top:38.94px;">
<span class="t" style="letter-spacing:-0.218px;left:4px;">KB003</span>
<span class="t" style="letter-spacing:-0.488px;left:164px;">BARANG03</span>
<span class="t" style="letter-spacing:0.146px;left:324px;">50000</span>
<span class="t" style="letter-spacing:0.204px;left:484px;">200</span>
</div>
<div class="trow" style="top:50.66px;">
<span class="t" style="letter-spacing:-0.218px;left:4px;">KB004</span>
<span class="t" style="letter-spacing:-0.488px;left:164px;">BARANG04</span>
<span class="t" style="letter-spacing:0.146px;left:324px;">35000</span>
<span class="t" style="letter-spacing:0.204px;left:484px;">100</span>
</div>
<div class="trow" style="top:62.38px;background:#38698d;">
<span class="t" style="letter-spacing:-0.218px;left:4px;color:#ffffff;">KB005</span>
<span class="t" style="letter-spacing:-0.488px;left:164px;color:#ffffff;">BARANG05</span>
<span class="t" style="letter-spacing:0.146px;left:324px;color:#ffffff;">30000</span>
<span class="t" style="letter-spacing:0.204px;left:484px;color:#ffffff;">100</span>
</div>
</div>
<div class="btn" style="left:41px;"><svg style="left:22.3px;top:2.500px" width="11" height="11" viewBox="0 0 11 11"><path d="M5.500 .500v10M.500 5.500h10" stroke="#8fbf1c" stroke-width="3.600"/><path d="M5.500 1v9M1 5.500h9" stroke="#c8e83c" stroke-width="2.200"/></svg><span class="t" style="letter-spacing:-0.145px;left:36.8px;">REFRESH</span></div>
<div class="btn" style="left:163px;"><svg style="left:27.8px;top:2.500px" width="11" height="11" viewBox="0 0 11 11"><rect x=".5" y=".5" width="10" height="10" rx="1" fill="#3f7fd0" stroke="#1f4f9a" stroke-width=".7"/><rect x="2.500" y=".800" width="6" height="3.800" fill="#f2f5f9"/><rect x="2.500" y="6.500" width="6" height="3.700" fill="#dfe6f0"/><rect x="6.500" y="1.300" width="1.300" height="2.500" fill="#3f7fd0"/></svg><span class="t" style="letter-spacing:-0.307px;left:42.3px;">SIMPAN</span></div>
<div class="btn" style="left:285px;"><svg style="left:34.3px;top:2px" width="12" height="12" viewBox="0 0 12 12"><path d="M1 1.500l7-1 3 8.500-7.500 2z" fill="#f6efe0" stroke="#b9a888" stroke-width=".6"/><path d="M10.500 1.500L6 8.500 4.800 10l.4-2.200L9.500 .800z" fill="#e8a030" stroke="#a86c14" stroke-width=".5"/></svg><span class="t" style="letter-spacing:-0.254px;left:49.3px;">EDIT</span></div>
<div class="btn" style="left:407.5px;"><svg style="left:27.8px;top:1.500px" width="14" height="14" viewBox="0 0 14 14"><path d="M1.500 2.500c0-2 8-2 8 0v8c0 2-8 2-8 0z" fill="#6f8fe0" stroke="#3f5fb0" stroke-width=".6"/><ellipse cx="5.500" cy="2.500" rx="4" ry="1.300" fill="#a9c0f3"/><circle cx="10" cy="10" r="3.300" fill="#5a7fe0" stroke="#d8e3fa" stroke-width=".7"/><path d="M8.600 8.600l2.800 2.800M11.400 8.600l-2.800 2.800" stroke="#fff" stroke-width=".9"/></svg><span class="t" style="letter-spacing:-0.303px;left:43.8px;">HAPUS</span></div>
<div class="btn" style="left:529.5px;width:105.5px;border-color:#6dbbe0;box-shadow:0 0 0 1px #3fb0e0;"><svg style="left:29.3px;top:2px" width="13" height="13" viewBox="0 0 13 13"><rect x="3" y=".500" width="7" height="4" fill="#f4f6f8" stroke="#a9b0b8" stroke-width=".5"/><rect x=".500" y="4" width="12" height="6" rx="1.200" fill="#dfe3e8" stroke="#8d96a0" stroke-width=".6"/><rect x="2.500" y="7.500" width="8" height="5" fill="#5ab0e8" stroke="#2f7fb8" stroke-width=".5"/><path d="M3.500 9.500h6M3.500 11h6" stroke="#eaf5fc" stroke-width=".6"/></svg><span class="t" style="letter-spacing:-0.169px;left:44.8px;">CETAK</span></div>
</div>
</div>
</body></html>
